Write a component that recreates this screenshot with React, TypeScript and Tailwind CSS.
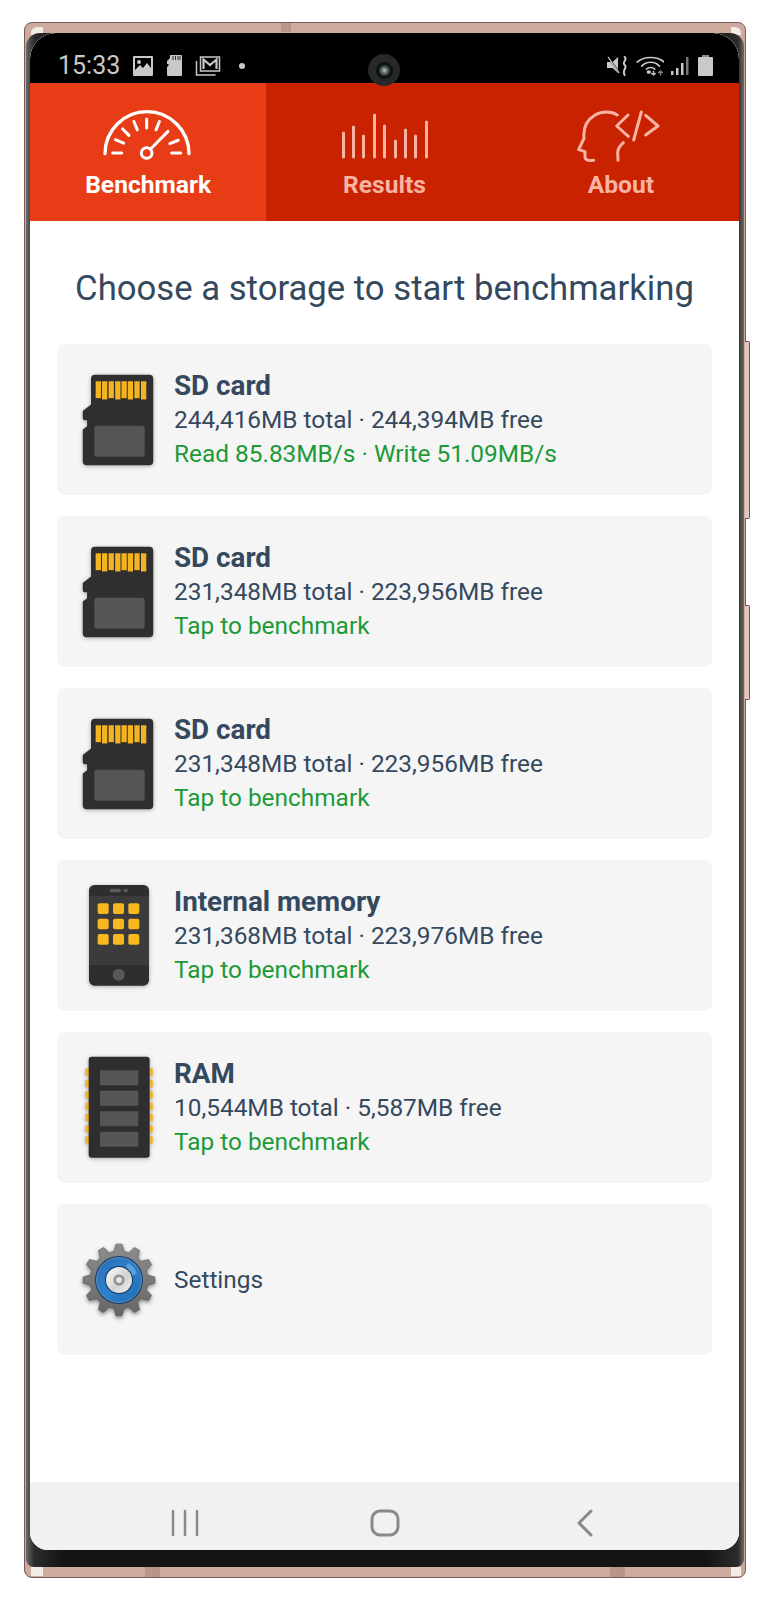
const storages = [
  { kind: "sd", name: "SD card", size: "244,416MB total · 244,394MB free", status: "Read 85.83MB/s · Write 51.09MB/s" },
  { kind: "sd", name: "SD card", size: "231,348MB total · 223,956MB free", status: "Tap to benchmark" },
  { kind: "sd", name: "SD card", size: "231,348MB total · 223,956MB free", status: "Tap to benchmark" },
  { kind: "phone", name: "Internal memory", size: "231,368MB total · 223,976MB free", status: "Tap to benchmark" },
  { kind: "ram", name: "RAM", size: "10,544MB total · 5,587MB free", status: "Tap to benchmark" },
];

function GaugeIcon() {
  const ticks = [180, 157, 135, 112, 90, 68, 22, 0];
  return (
    <svg className="h-[56px] w-[90px]" viewBox="310 320 270 168" fill="none" stroke="#fff" strokeLinecap="round">
      <path d="M316 460A126 126 0 0 1 568 460" strokeWidth="10" />
      {ticks.map((deg) => {
        const a = (deg * Math.PI) / 180;
        return (
          <line
            key={deg}
            x1={441 + 75 * Math.cos(a)}
            y1={458 - 75 * Math.sin(a)}
            x2={441 + 102 * Math.cos(a)}
            y2={458 - 102 * Math.sin(a)}
            strokeWidth="9"
          />
        );
      })}
      <circle cx="441" cy="458" r="16" strokeWidth="9" />
      <path d="M453 446L505 393" strokeWidth="9" />
    </svg>
  );
}

function BarsIcon() {
  const bars = [[344, 133], [354, 127], [364, 136], [375, 115], [385, 126], [396, 141], [406, 130], [416, 136], [427, 122]];
  return (
    <svg className="h-[56px] w-[90px]" viewBox="339.5 107 90 56" fill="none" stroke="#f8b3a3" strokeWidth="3" strokeLinecap="round">
      {bars.map(([x, top]) => (
        <line key={x} x1={x} y1={top} x2={x} y2={157} />
      ))}
    </svg>
  );
}

function HeadIcon() {
  return (
    <svg className="h-[56px] w-[90px]" viewBox="579 321 270 168" fill="none" stroke="#f8b3a3" strokeWidth="9" strokeLinecap="round" strokeLinejoin="round">
      <path d="M703 345C685 333 655 333 635 346C612 360 600 385 603 415L587 449L606 455L606 472C608 480 618 483 632 481" />
      <path d="M721 428C712 436 704 446 704 458L705 481" />
      <path d="M735 345L701 378L736 409" />
      <path d="M775 336L752 420" />
      <path d="M788 346L825 378L788 405" />
    </svg>
  );
}

function SdIcon() {
  const contacts = [136, 155, 175, 195, 214, 233, 253, 273];
  return (
    <svg className="mr-[3px] h-[92px] w-[72px] drop-shadow-[0_1px_2px_rgba(0,0,0,0.3)]" viewBox="95 100 217 278">
      <path d="M122 114Q122 102 134 102H298Q310 102 310 114V364Q310 376 298 376H109Q97 376 97 364V268L110 258V240H101Q97 238 97 232V212L122 192Z" fill="#2f2f2f" />
      {contacts.map((x, i) => (
        <rect key={x} x={x} y="122" width="16" height={i % 2 ? 55 : 51} fill="#f4b321" />
      ))}
      <rect x="132" y="256" width="152" height="94" rx="8" fill="#565656" />
    </svg>
  );
}

function PhoneIcon() {
  const keys = [
    [144, 160], [190, 160], [236, 160],
    [144, 206], [190, 206], [236, 206],
    [144, 252], [190, 252], [236, 252],
  ];
  return (
    <svg className="h-[101px] w-[60px] drop-shadow-[0_1px_2px_rgba(0,0,0,0.3)]" viewBox="118 105 180 303">
      <rect x="118" y="105" width="180" height="302" rx="16" fill="#2e2e2e" />
      <rect x="118" y="138" width="180" height="207" fill="#3b3b3b" />
      <rect x="180" y="116" width="34" height="11" rx="5" fill="#5a5a5a" />
      <rect x="221" y="116" width="14" height="11" rx="5" fill="#5a5a5a" />
      {keys.map(([x, y]) => (
        <rect key={`${x}-${y}`} x={x} y={y} width="33" height="32" rx="6" fill="#f9b81e" />
      ))}
      <circle cx="207" cy="374" r="18" fill="#585858" />
    </svg>
  );
}

function RamIcon() {
  const pins = [655, 689, 723, 757, 791, 825, 858];
  const cells = [660, 722, 783, 845];
  return (
    <svg className="h-[103px] w-[68px] drop-shadow-[0_1px_2px_rgba(0,0,0,0.3)]" viewBox="107 619 204 306">
      {pins.map((y) => (
        <g key={y} fill="#efb229">
          <rect x="108" y={y} width="14" height="22" rx="2" />
          <rect x="296" y={y} width="14" height="22" rx="2" />
        </g>
      ))}
      <rect x="118" y="620" width="183" height="303" rx="9" fill="#2e2e2e" />
      {cells.map((y) => (
        <rect key={y} x="152" y={y} width="115" height="45" rx="2" fill="#565656" />
      ))}
    </svg>
  );
}

function gearPath(teeth: number, outer: number, inner: number) {
  const step = (Math.PI * 2) / teeth;
  const pts: string[] = [];
  for (let i = 0; i < teeth; i++) {
    const a = i * step - Math.PI / 2;
    const corners: [number, number][] = [
      [inner, a - step * 0.34],
      [outer, a - step * 0.16],
      [outer, a + step * 0.16],
      [inner, a + step * 0.34],
    ];
    corners.forEach(([r, t]) => pts.push(`${(37 + r * Math.cos(t)).toFixed(2)} ${(37 + r * Math.sin(t)).toFixed(2)}`));
  }
  return `M${pts.join("L")}Z`;
}

function GearIcon() {
  return (
    <svg className="h-[74px] w-[74px] drop-shadow-[0_2px_2px_rgba(0,0,0,0.45)]" viewBox="0 0 74 74">
      <defs>
        <linearGradient id="steel" x1="0" y1="0" x2="0" y2="1">
          <stop offset="0" stopColor="#8d8d8d" />
          <stop offset="1" stopColor="#666" />
        </linearGradient>
        <linearGradient id="blue" x1="0" y1="0" x2="1" y2="1">
          <stop offset="0" stopColor="#2a6fb5" />
          <stop offset="0.5" stopColor="#2f80cc" />
          <stop offset="1" stopColor="#1e6bb0" />
        </linearGradient>
        <linearGradient id="disc" x1="0" y1="0" x2="1" y2="1">
          <stop offset="0" stopColor="#fff" />
          <stop offset="0.55" stopColor="#d2d2d2" />
          <stop offset="1" stopColor="#f4f4f4" />
        </linearGradient>
      </defs>
      <path d={gearPath(12, 36, 29)} fill="url(#steel)" stroke="#555" strokeWidth="0.6" strokeLinejoin="round" />
      <circle cx="37" cy="37" r="24" fill="#143a63" />
      <circle cx="37" cy="37" r="22.5" fill="url(#blue)" stroke="#7fb6e0" strokeWidth="0.6" />
      <path d="M46 20A19 19 0 0 1 55 31L48 33A13 13 0 0 0 43 26Z" fill="#5b9fd8" />
      <circle cx="37" cy="37" r="14" fill="#123457" />
      <circle cx="37" cy="37" r="13" fill="url(#disc)" />
      <circle cx="37" cy="37" r="5.5" fill="#8f8f8f" />
      <circle cx="37" cy="37" r="3" fill="#e4e4e4" />
    </svg>
  );
}

function StorageIcon({ kind }: { kind: string }) {
  if (kind === "sd") return <SdIcon />;
  if (kind === "phone") return <PhoneIcon />;
  return <RamIcon />;
}

function StatusBar() {
  return (
    <div className="flex h-[50px] shrink-0 items-center justify-between rounded-t-[26px] bg-black pl-[28px] pr-[26px] pt-[15px]">
      <div className="flex items-center">
        <span className="text-[25px] leading-none text-[#c9c9c9]">15:33</span>
        <svg className="ml-[13px] h-[20px] w-[20px]" viewBox="0 0 20 20" fill="#c9c9c9">
          <path fillRule="evenodd" d="M1 0H19Q20 0 20 1V19Q20 20 19 20H1Q0 20 0 19V1Q0 0 1 0ZM2 2V14L7 9L10 12L14 7L18 12V2ZM6 4A2 2 0 1 0 6 8A2 2 0 1 0 6 4Z" />
        </svg>
        <svg className="ml-[14px] h-[21px] w-[15px]" viewBox="0 0 15 21" fill="#c9c9c9">
          <path d="M3 0H14Q15 0 15 1V20Q15 21 14 21H1Q0 21 0 20V12L1.500 10.500V9H0V6L3 3Z" />
          <path d="M6 1V5M8.500 1V5M11 1V5M13 1V5" stroke="#000" strokeWidth="0.8" />
        </svg>
        <svg className="ml-[13px] h-[20px] w-[26px]" viewBox="0 0 25 20" fill="none" stroke="#c9c9c9" strokeWidth="1.500">
          <path d="M5 1H24V15H5Z" />
          <path d="M1 5V19H20" />
          <path d="M8 13V3.500L14.500 9L21 3.500V13" strokeWidth="2.200" />
        </svg>
        <span className="ml-[18px] h-[6px] w-[6px] rounded-full bg-[#c9c9c9]" />
      </div>
      <div className="flex items-center">
        <svg className="h-[20px] w-[21px]" viewBox="0 0 19 20" preserveAspectRatio="none" fill="none">
          <path d="M0 6H5L10 1V17L5 12H0Z" fill="#c9c9c9" />
          <path d="M1 1L12 18" stroke="#000" strokeWidth="1.500" />
          <path d="M1 1L11 17" stroke="#c9c9c9" strokeWidth="1.200" />
          <path d="M16 1C19 4 13 6 16 9C19 12 13 14 16 19" stroke="#c9c9c9" strokeWidth="1.800" strokeLinecap="round" />
        </svg>
        <svg className="ml-[8px] h-[20px] w-[28px]" viewBox="0 0 24 20" preserveAspectRatio="none" fill="none" stroke="#c9c9c9" strokeWidth="1.700" strokeLinecap="round">
          <path d="M1 6C7 0 18 0 24 6" />
          <path d="M5 10C9 5 16 5 20 10" />
          <path d="M9 13C11 11 14 11 16 13" />
          <circle cx="11" cy="16" r="1" fill="#c9c9c9" />
          <path d="M15 15V19M13.500 17.500L15 19L16.500 17.500" strokeWidth="1.200" />
          <path d="M21 19V15M19.500 16.500L21 15L22.500 16.500" strokeWidth="1.200" stroke="#8a8a8a" />
        </svg>
        <svg className="ml-[7px] h-[18px] w-[18px]" viewBox="0 0 18 18" fill="#c9c9c9">
          <rect x="0" y="14" width="2.500" height="4" />
          <rect x="5" y="11" width="2.500" height="7" />
          <rect x="10" y="6" width="2.500" height="12" />
          <rect x="15" y="0" width="2.500" height="18" fill="#777" />
        </svg>
        <svg className="ml-[9px] h-[21px] w-[15px]" viewBox="0 0 15 21" fill="#c9c9c9">
          <rect x="4" y="0" width="7" height="3" fill="#8a8a8a" />
          <rect x="0" y="2" width="15" height="19" rx="1" />
        </svg>
      </div>
    </div>
  );
}

function TabBar() {
  return (
    <div className="flex h-[138px] shrink-0 bg-[#c92200]">
      <div className="flex flex-1 flex-col items-center bg-[#e83c17] pt-[24px] text-white">
        <GaugeIcon />
        <span className="mt-[8px] text-[24.6px] font-bold leading-[28px]">Benchmark</span>
      </div>
      <div className="flex flex-1 flex-col items-center pt-[24px] text-[#f8b3a3]">
        <BarsIcon />
        <span className="mt-[8px] text-[24.6px] font-bold leading-[28px]">Results</span>
      </div>
      <div className="flex flex-1 flex-col items-center pt-[24px] text-[#f8b3a3]">
        <HeadIcon />
        <span className="mt-[8px] text-[24.6px] font-bold leading-[28px]">About</span>
      </div>
    </div>
  );
}

function NavBar() {
  return (
    <div className="flex h-[68px] shrink-0 items-start justify-center bg-[#f1f1f1] pt-[27px]">
      <div className="flex w-[200px] justify-center">
        <svg className="h-[28px] w-[28px]" viewBox="0 0 28 28" stroke="#8a8a8a" strokeWidth="2.500" strokeLinecap="round">
          <path d="M2 2V26M14 2V26M26 2V26" />
        </svg>
      </div>
      <div className="flex w-[200px] justify-center">
        <svg className="h-[28px] w-[30px]" viewBox="0 0 30 28" fill="none" stroke="#8a8a8a" strokeWidth="3">
          <rect x="2" y="2" width="26" height="24" rx="8" />
        </svg>
      </div>
      <div className="flex w-[200px] justify-center">
        <svg className="h-[28px] w-[18px]" viewBox="0 0 18 28" fill="none" stroke="#8a8a8a" strokeWidth="3" strokeLinecap="round" strokeLinejoin="round">
          <path d="M15 2L3 14L15 26" />
        </svg>
      </div>
    </div>
  );
}

export default function App() {
  return (
    <div className="h-[1600px] w-[768px] bg-white pl-[24px] pt-[22px] font-['Roboto',sans-serif]">
      <div className="relative flex h-[1556px] w-[722px] flex-col rounded-[8px] border border-[#7b5a52] bg-[#cdaa9e] px-[1px] pb-[10px] pt-[10px]">
        <span className="absolute left-[6px] top-[4px] h-[8px] w-[12px] rounded-tl-[6px] bg-[#f5ece8]" />
        <span className="absolute right-[4px] top-[4px] h-[8px] w-[10px] rounded-tr-[6px] bg-[#f5ece8]" />
        <span className="absolute bottom-[1px] left-[6px] h-[9px] w-[12px] bg-[#f5ece8]" />
        <span className="absolute bottom-[1px] right-[4px] h-[9px] w-[10px] bg-[#f5ece8]" />
        <span className="absolute left-[256px] top-0 h-[9px] w-[10px] bg-[#b8948a]" />
        <span className="absolute bottom-0 left-[120px] h-[10px] w-[15px] bg-[#b8948a]" />
        <span className="absolute bottom-0 right-[120px] h-[10px] w-[15px] bg-[#b8948a]" />
        <span className="absolute left-full top-[318px] h-[178px] w-[5px] rounded-r-[2px] border border-l-0 border-[#6d5049] bg-[#e2c8be]" />
        <span className="absolute left-full top-[582px] h-[95px] w-[5px] rounded-r-[2px] border border-l-0 border-[#6d5049] bg-[#e2c8be]" />

        <div className="relative flex flex-1 flex-col rounded-b-[8px] rounded-t-[14px] bg-[linear-gradient(90deg,#6a6a6a_0px,#2c2c2c_8px,#141414_36px,#141414_680px,#2c2c2c_712px,#6a6a6a_100%)] pb-[17px] pl-[4px] pr-[5px]">
          <div className="relative flex flex-1 flex-col overflow-hidden rounded-b-[18px] rounded-t-[26px] bg-white">
            <StatusBar />
            <span className="absolute left-[338px] top-[21px] flex h-[32px] w-[32px] items-center justify-center rounded-full bg-[#26282a]">
              <span className="h-[17px] w-[17px] rounded-full border-[3px] border-[#111] bg-[radial-gradient(circle,#a8c4b8_0%,#3c4a4c_55%,#0c0c0c_100%)]" />
            </span>
            <TabBar />

            <div className="flex flex-1 flex-col">
              <h1 className="mb-[36px] mt-[47px] text-center text-[34.7px] font-normal leading-[40px] text-[#34495e]">
                Choose a storage to start benchmarking
              </h1>
              <div className="flex flex-col gap-[21px] px-[27px]">
                {storages.map((s, i) => (
                  <div key={i} className="flex h-[151px] items-center gap-[16px] rounded-[8px] bg-[#f5f5f5] pl-[23px]">
                    <div className="flex w-[78px] justify-center">
                      <StorageIcon kind={s.kind} />
                    </div>
                    <div className="flex flex-col">
                      <span className="text-[27.8px] font-bold leading-[34px] text-[#34495e]">{s.name}</span>
                      <span className="text-[24.4px] leading-[34px] text-[#34495e]">{s.size}</span>
                      <span className="text-[24.4px] leading-[34px] text-[#1c9a38]">{s.status}</span>
                    </div>
                  </div>
                ))}
                <div className="flex h-[151px] items-center gap-[16px] rounded-[8px] bg-[#f5f5f5] pl-[23px]">
                  <div className="flex w-[78px] justify-center">
                    <GearIcon />
                  </div>
                  <span className="text-[24.4px] leading-[34px] text-[#34495e]">Settings</span>
                </div>
              </div>
            </div>

            <NavBar />
          </div>
        </div>
      </div>
    </div>
  );
}
